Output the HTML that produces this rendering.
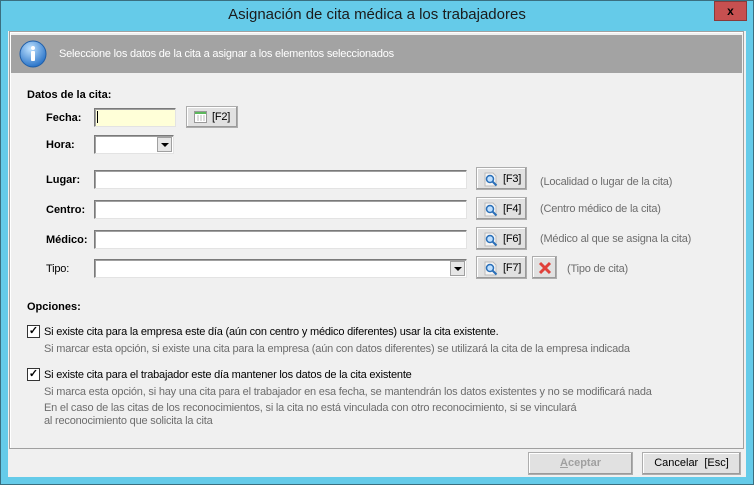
<!DOCTYPE html>
<html><head><style>
*{box-sizing:border-box;margin:0;padding:0}
body{width:754px;height:485px;background:#65cbe9;font-family:"Liberation Sans",sans-serif;font-size:11px;color:#000;position:relative;overflow:hidden}
.win{position:absolute;left:0;top:0;width:754px;height:485px;border:1px solid #3a6f80}
.title{position:absolute;left:0;top:6px;width:754px;text-align:center;font-size:15px;color:#1b1b1b}
.close{position:absolute;left:714px;top:1px;width:33px;height:20px;background:#c75050;border:1px solid #8a3a3a;color:#000;font-weight:bold;font-size:12px;text-align:center;line-height:18px}
.client{position:absolute;left:8px;top:31px;width:738px;height:446px;background:#f0f0f0}
.panel{position:absolute;left:9px;top:31px;width:735px;height:418px;border:1px solid #a0a0a0;box-shadow:inset 1px 1px 0 #fff}
.hdr{position:absolute;left:11px;top:35px;width:731px;height:38px;background:#a3a3a3}
.hdr span{position:absolute;left:48px;top:13px;color:#fff;font-size:11px;letter-spacing:-0.2px}
.a{position:absolute;white-space:nowrap;letter-spacing:-0.2px}
.b{font-weight:bold;letter-spacing:0}
.in{position:absolute;background:#fff;border:1px solid #7a7a7a;border-right-color:#e3e3e3;border-bottom-color:#e3e3e3;box-shadow:inset 1px 1px 0 #a0a0a0}
.btn{position:absolute;background:#e1e1e1;border:1px solid #adadad;box-shadow:inset -1px -1px 0 #9a9a9a,inset 1px 1px 0 #fff;font-size:11px}
.dd{position:absolute;width:15px;height:15px;background:#e6e6e6;border:1px solid #a0a0a0}
.dd:after{content:"";position:absolute;left:3px;top:5px;border:4px solid transparent;border-top:4px solid #000;border-bottom:0}
.g{color:#6d6d6d}
.cb{position:absolute;width:13px;height:13px;border:1px solid #333;background:#fff;font-size:11px;line-height:11px;text-align:center;font-weight:bold}
</style></head><body>
<div class="win"></div>
<div class="title">Asignación de cita médica a los trabajadores</div>
<div class="close">x</div>
<div class="client"></div>
<div class="panel"></div>
<div class="hdr"><svg style="position:absolute;left:8px;top:5px" width="28" height="28"><defs><radialGradient id="r" cx="40%" cy="30%" r="70%"><stop offset="0" stop-color="#bfe2ff"/><stop offset="1" stop-color="#2a74c8"/></radialGradient></defs><circle cx="14" cy="14" r="13" fill="url(#r)" stroke="#1f5ea8"/><circle cx="14" cy="8" r="2" fill="#fff"/><rect x="12" y="11" width="4" height="10" rx="1" fill="#fff"/></svg><span>Seleccione los datos de la cita a asignar a los elementos seleccionados</span></div>

<div class="a b" style="left:27px;top:89px">Datos de la cita:</div>
<div class="a b" style="left:46px;top:112px">Fecha:</div>
<div class="in" style="left:94px;top:108px;width:82px;height:19px;background:#ffffd8"><div style="position:absolute;left:2px;top:2px;width:1px;height:12px;background:#000"></div></div>
<div class="btn" style="left:186px;top:106px;width:52px;height:22px"><svg style="position:absolute;left:7px;top:4px" width="13" height="12"><rect x=".5" y=".5" width="12" height="11" fill="#fff" stroke="#999"/><rect x="1" y="1" width="11" height="2" fill="#5cb85c"/><path d="M3 5h2M6 5h2M9 5h2M3 7h2M6 7h2M9 7h2M3 9h2M6 9h2M9 9h2" stroke="#bbb"/></svg><span class="a" style="left:25px;top:4px">[F2]</span></div>
<div class="a b" style="left:46px;top:139px">Hora:</div>
<div class="in" style="left:94px;top:135px;width:80px;height:19px"><div class="dd" style="left:62px;top:1px"></div></div>

<div class="a b" style="left:46px;top:174px">Lugar:</div>
<div class="in" style="left:94px;top:170px;width:373px;height:19px"></div>
<div class="a b" style="left:46px;top:204px">Centro:</div>
<div class="in" style="left:94px;top:200px;width:373px;height:19px"></div>
<div class="a b" style="left:46px;top:234px">Médico:</div>
<div class="in" style="left:94px;top:230px;width:373px;height:19px"></div>
<div class="a" style="left:46px;top:263px">Tipo:</div>
<div class="in" style="left:94px;top:259px;width:373px;height:19px"><div class="dd" style="left:355px;top:1px"></div></div>

<div class="btn" style="left:476px;top:167px;width:51px;height:23px"><svg style="position:absolute;left:6px;top:4px" width="16" height="15"><path d="M2 1h8l3 3v10H2z" fill="#f4f4f4" stroke="#bbb"/><circle cx="7" cy="7" r="3.5" fill="#bfe0ff" stroke="#2a6fb8" stroke-width="1.5"/><path d="M9.5 9.5l4 4" stroke="#2a6fb8" stroke-width="2"/></svg><span class="a" style="left:26px;top:5px">[F3]</span></div>
<div class="btn" style="left:476px;top:197px;width:51px;height:23px"><svg style="position:absolute;left:6px;top:4px" width="16" height="15"><path d="M2 1h8l3 3v10H2z" fill="#f4f4f4" stroke="#bbb"/><circle cx="7" cy="7" r="3.5" fill="#bfe0ff" stroke="#2a6fb8" stroke-width="1.5"/><path d="M9.5 9.5l4 4" stroke="#2a6fb8" stroke-width="2"/></svg><span class="a" style="left:26px;top:5px">[F4]</span></div>
<div class="btn" style="left:476px;top:227px;width:51px;height:23px"><svg style="position:absolute;left:6px;top:4px" width="16" height="15"><path d="M2 1h8l3 3v10H2z" fill="#f4f4f4" stroke="#bbb"/><circle cx="7" cy="7" r="3.5" fill="#bfe0ff" stroke="#2a6fb8" stroke-width="1.5"/><path d="M9.5 9.5l4 4" stroke="#2a6fb8" stroke-width="2"/></svg><span class="a" style="left:26px;top:5px">[F6]</span></div>
<div class="btn" style="left:476px;top:256px;width:51px;height:23px"><svg style="position:absolute;left:6px;top:4px" width="16" height="15"><path d="M2 1h8l3 3v10H2z" fill="#f4f4f4" stroke="#bbb"/><circle cx="7" cy="7" r="3.5" fill="#bfe0ff" stroke="#2a6fb8" stroke-width="1.5"/><path d="M9.5 9.5l4 4" stroke="#2a6fb8" stroke-width="2"/></svg><span class="a" style="left:26px;top:5px">[F7]</span></div>
<div class="btn" style="left:532px;top:256px;width:25px;height:23px"><svg style="position:absolute;left:5px;top:4px" width="14" height="14"><path d="M2 2l10 10M12 2L2 12" stroke="#e0403a" stroke-width="3"/></svg></div>

<div class="a g" style="left:540px;top:176px">(Localidad o lugar de la cita)</div>
<div class="a g" style="left:540px;top:203px">(Centro médico de la cita)</div>
<div class="a g" style="left:540px;top:233px">(Médico al que se asigna la cita)</div>
<div class="a g" style="left:567px;top:263px">(Tipo de cita)</div>

<div class="a b" style="left:27px;top:301px">Opciones:</div>
<div class="cb" style="left:27px;top:325px">✓</div>
<div class="a" style="left:44px;top:326px">Si existe cita para la empresa este día (aún con centro y médico diferentes) usar la cita existente.</div>
<div class="a g" style="left:44px;top:343px">Si marcar esta opción, si existe una cita para la empresa (aún con datos diferentes) se utilizará la cita de la empresa indicada</div>
<div class="cb" style="left:27px;top:368px">✓</div>
<div class="a" style="left:44px;top:369px">Si existe cita para el trabajador este día mantener los datos de la cita existente</div>
<div class="a g" style="left:44px;top:386px">Si marca esta opción, si hay una cita para el trabajador en esa fecha, se mantendrán los datos existentes y no se modificará nada</div>
<div class="a g" style="left:44px;top:402px">En el caso de las citas de los reconocimientos, si la cita no está vinculada con otro reconocimiento, si se vinculará</div>
<div class="a g" style="left:44px;top:415px">al reconocimiento que solicita la cita</div>

<div class="btn" style="left:528px;top:452px;width:105px;height:23px;color:#a0a0a0;font-weight:bold;text-align:center;line-height:21px"><u>A</u>ceptar</div>
<div class="btn" style="left:642px;top:452px;width:99px;height:23px;text-align:center;line-height:21px">Cancelar &nbsp;[Esc]</div>
</body></html>
